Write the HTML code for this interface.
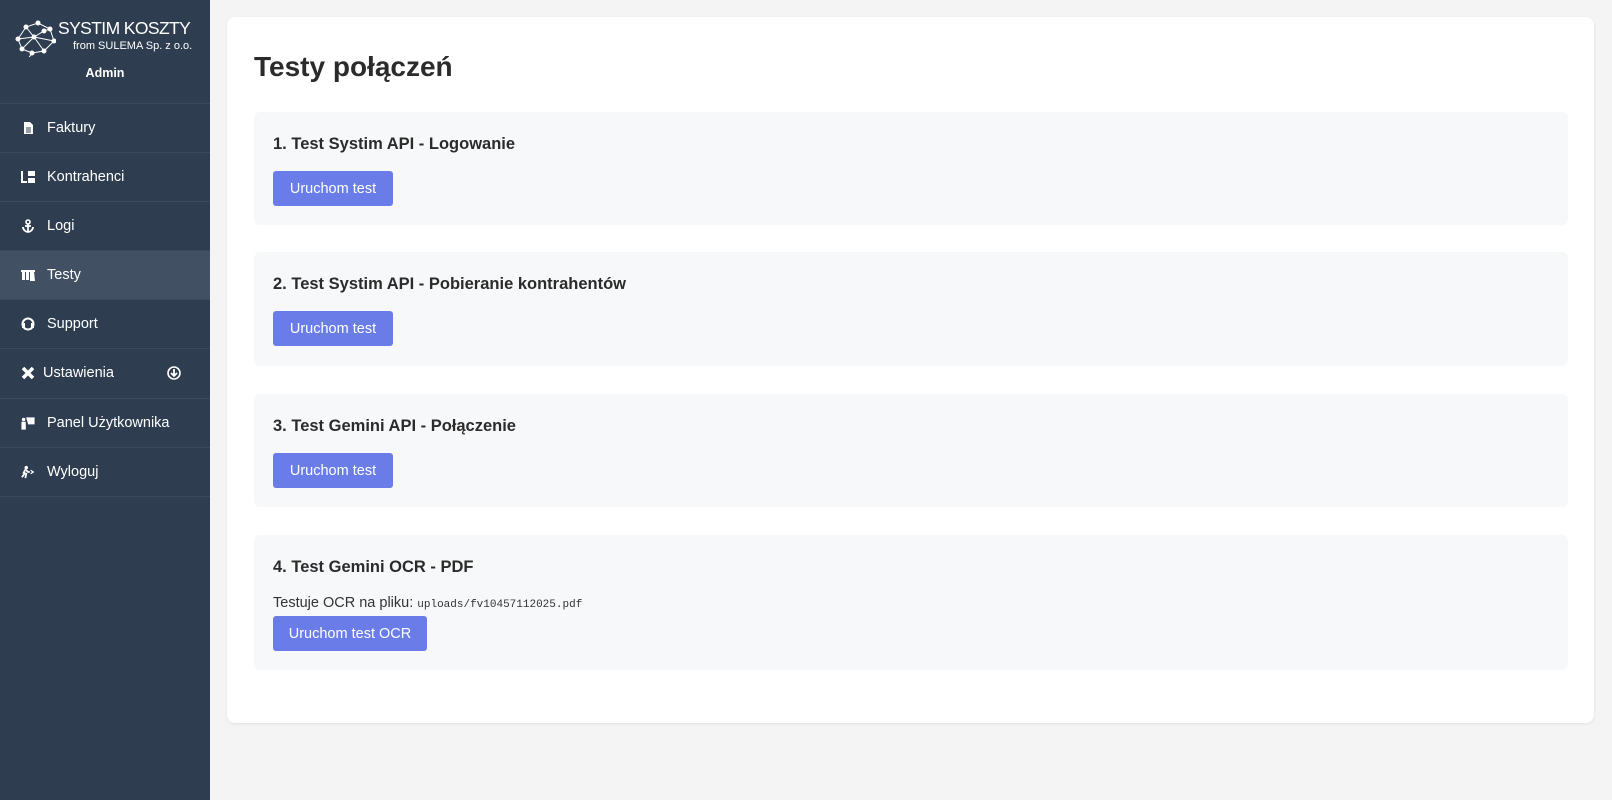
<!DOCTYPE html>
<html><head><meta charset="utf-8"><style>
*{box-sizing:border-box;margin:0;padding:0}
body{width:1612px;height:800px;background:#f4f4f5;font-family:"Liberation Sans",sans-serif;position:relative;overflow:hidden}
.side{position:absolute;left:0;top:0;width:210px;height:800px;background:#2e3d50;color:#fff}
.logo{position:absolute;left:14px;top:16px;width:185px}
.brand{position:absolute;left:44px;top:2px;font-size:17.5px;letter-spacing:-0.6px;white-space:nowrap}
.from{position:absolute;left:59px;top:24px;font-size:11px;white-space:nowrap}
.admin{position:absolute;top:66px;width:210px;text-align:center;font-size:12.5px;font-weight:bold}
.item{position:absolute;left:0;width:210px;height:49px;border-top:1px solid #3b4a5c;font-size:14.5px;display:flex;align-items:center;padding-left:47px}
.item.act{background:#415063}
.ic{position:absolute;left:21px;top:17px;width:14px;height:14px}
.card{position:absolute;left:227px;top:17px;width:1367px;height:706px;background:#fff;border-radius:8px;box-shadow:0 1px 3px rgba(0,0,0,.08)}
h1{position:absolute;left:254px;top:51px;font-size:28px;color:#2b2b2b}
.sec{position:absolute;left:254px;width:1314px;background:#f7f8fa;border-radius:6px}
.sec h3{position:absolute;left:19px;top:23px;font-size:16.5px;color:#2b2b2b}
.btn{position:absolute;left:19px;width:120px;height:35px;background:#6a7ce8;color:#fff;border-radius:3px;font-size:14.5px;display:flex;align-items:center;justify-content:center}
.txt{position:absolute;left:19px;top:60px;font-size:14.5px;color:#333}
.txt code{font-family:"Liberation Mono",monospace;font-size:11px}
</style></head><body>
<div class="side">
 <div class="logo">
  <svg width="42" height="38" style="position:absolute;left:0;top:3px" stroke="#fff" stroke-width="1" fill="#fff">
   <path d="M4 20 L12 8 L24 4 L36 10 L40 22 L30 32 L18 34 L8 30 Z M12 8 L20 18 L30 12 L36 10 M20 18 L30 32 M20 18 L8 30 M4 20 L20 18 L40 22 M18 34 L14 40" fill="none"/>
   <circle cx="4" cy="20" r="2"/><circle cx="12" cy="8" r="2"/><circle cx="24" cy="4" r="2"/><circle cx="36" cy="10" r="2"/><circle cx="40" cy="22" r="2"/><circle cx="30" cy="32" r="2"/><circle cx="18" cy="34" r="2"/><circle cx="8" cy="30" r="2"/><circle cx="20" cy="18" r="2"/><circle cx="30" cy="12" r="2"/>
  </svg>
  <div class="brand">SYSTIM KOSZTY</div>
  <div class="from">from SULEMA Sp. z o.o.</div>
 </div>
 <div class="admin">Admin</div>
 <div class="item" style="top:103px"><svg class="ic" viewBox="0 0 14 14"><path d="M3 1h6l3 3v9H3z" fill="#fff"/><path d="M5 7h5M5 9h5M5 11h5" stroke="#2e3d50"/></svg>Faktury</div>
 <div class="item" style="top:152px"><svg class="ic" viewBox="0 0 14 14"><path d="M1 1v11h5" stroke="#fff" stroke-width="2" fill="none"/><rect x="7" y="1" width="7" height="5" fill="#fff"/><rect x="7" y="8" width="7" height="5" fill="#fff"/></svg>Kontrahenci</div>
 <div class="item" style="top:201px"><svg class="ic" viewBox="0 0 14 14"><circle cx="7" cy="3" r="2" fill="none" stroke="#fff" stroke-width="1.6"/><path d="M7 5v8M2 8c0 3 3 5 5 5s5-2 5-5M4 7h6" stroke="#fff" stroke-width="1.8" fill="none"/></svg>Logi</div>
 <div class="item act" style="top:250px"><svg class="ic" viewBox="0 0 14 14"><path d="M0 2h14v2H0z M1 4h3v8H1z M5 4h3v8H5z M9 4h4l1 9H9z" fill="#fff"/></svg>Testy</div>
 <div class="item" style="top:299px"><svg class="ic" viewBox="0 0 14 14"><circle cx="7" cy="7" r="5.5" fill="none" stroke="#fff" stroke-width="2"/><rect x="1" y="6" width="3" height="5" fill="#fff"/><rect x="10" y="6" width="3" height="5" fill="#fff"/></svg>Support</div>
 <div class="item" style="top:348px;padding-left:43px"><svg class="ic" viewBox="0 0 14 14"><path d="M2 2l10 10M12 2L2 12" stroke="#fff" stroke-width="3.5"/></svg>Ustawienia<svg style="position:absolute;left:167px;top:17px" width="14" height="14" viewBox="0 0 14 14"><circle cx="7" cy="7" r="6" fill="none" stroke="#fff" stroke-width="1.6"/><path d="M7 3v6M4 7l3 3 3-3" stroke="#fff" stroke-width="1.8" fill="none"/></svg></div>
 <div class="item" style="top:398px"><svg class="ic" viewBox="0 0 16 14"><circle cx="3" cy="3" r="2" fill="#fff"/><path d="M1 6h4v8H1z M6 1h9v7H8" fill="#fff" stroke="#fff"/></svg>Panel Użytkownika</div>
 <div class="item" style="top:447px"><svg class="ic" viewBox="0 0 16 14"><circle cx="6" cy="2" r="2" fill="#fff"/><path d="M5 4l-2 4 3 1-1 5M5 4l3 3 2 0M4 9l-3 4" stroke="#fff" stroke-width="2" fill="none"/><path d="M11 5l3 2-3 2" stroke="#fff" stroke-width="1.5" fill="none"/></svg>Wyloguj</div>
 <div class="item" style="top:496px;height:1px"></div>
</div>
<div class="card"></div>
<h1>Testy połączeń</h1>
<div class="sec" style="top:112px;height:113px"><h3>1. Test Systim API - Logowanie</h3><div class="btn" style="top:59px">Uruchom test</div></div>
<div class="sec" style="top:252px;height:114px"><h3>2. Test Systim API - Pobieranie kontrahentów</h3><div class="btn" style="top:59px">Uruchom test</div></div>
<div class="sec" style="top:394px;height:113px"><h3>3. Test Gemini API - Połączenie</h3><div class="btn" style="top:59px">Uruchom test</div></div>
<div class="sec" style="top:535px;height:135px"><h3>4. Test Gemini OCR - PDF</h3><div class="txt">Testuje OCR na pliku: <code>uploads/fv10457112025.pdf</code></div><div class="btn" style="top:81px;width:154px">Uruchom test OCR</div></div>
</body></html>
